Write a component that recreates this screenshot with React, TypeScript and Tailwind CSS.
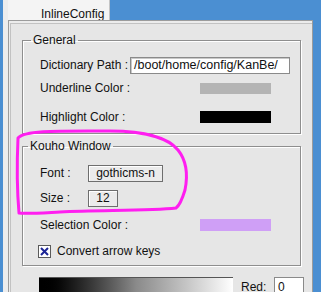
export default function App() {
  return (
    <div className="relative h-[292px] w-[321px] overflow-hidden bg-[#4b8fd2] font-['Liberation_Sans',Arial,sans-serif] text-[12px] leading-[12px] text-[#111]">
      <div className="ml-[3px] flex h-full">
        {/* window frame strip */}
        <div className="h-full w-[5px] bg-[#ededed]" />
        <div className="flex w-[305px] flex-col">
          <div className="flex h-[22px]">
            <div className="w-[102px] border-r border-[#c4c4c4] bg-[#f4f4f4] pl-[33px] pt-[8px] text-[12px] leading-[12px]">
              InlineConfig
            </div>
          </div>
          <div className="flex-1 border-l border-t border-r border-[#9c9c9c] bg-[#ececec] pl-[1px] pt-[2px]">
            <div className="h-full border-l border-t border-[#c2c2c2] bg-[#e6e6e6] pl-[11px] pt-[10px]">
              <fieldset className="w-[279px] border border-[#8e8e8e] p-0 pb-[6px] shadow-[1px_1px_0_#fff,inset_1px_1px_0_#fff]">
                <legend className="ml-[8px] px-[2px] leading-[12px]">General</legend>
                <div className="pl-[17px]">
                  <div className="mt-[9px] flex h-[20px] items-center">
                    <span className="w-[90px]">Dictionary Path :</span>
                    <div className="flex h-[17px] w-[160px] items-center border border-[#8a8a8a] bg-white pl-[3px] text-[12.5px] shadow-[inset_1px_1px_0_#c8c8c8]">
                      /boot/home/config/KanBe/
                    </div>
                  </div>
                  <div className="mt-[3px] flex h-[20px] items-center">
                    <span className="w-[160px]">Underline Color :</span>
                    <div className="h-[11px] w-[71px] bg-[#b4b4b4]" />
                  </div>
                  <div className="mt-[9px] flex h-[20px] items-center">
                    <span className="w-[160px]">Highlight Color :</span>
                    <div className="h-[12px] w-[71px] bg-black" />
                  </div>
                </div>
              </fieldset>

              <fieldset className="mt-[6px] w-[279px] border border-[#8e8e8e] p-0 pb-[4px] shadow-[1px_1px_0_#fff,inset_1px_1px_0_#fff]">
                <legend className="ml-[5px] px-[2px] leading-[12px]">Kouho Window</legend>
                <div className="pl-[17px]">
                  <div className="mt-[11px] flex h-[20px] items-center">
                    <span className="w-[48px]">Font :</span>
                    <div className="flex h-[17px] w-[75px] items-center justify-center border border-[#6e6e6e] bg-[#ebebeb] shadow-[inset_1px_1px_0_#fff]">
                      gothicms-n
                    </div>
                  </div>
                  <div className="mt-[5px] flex h-[20px] items-center">
                    <span className="w-[48px]">Size :</span>
                    <div className="flex h-[17px] w-[30px] items-center justify-center border border-[#6e6e6e] bg-[#ebebeb] shadow-[inset_1px_1px_0_#fff]">
                      12
                    </div>
                  </div>
                  <div className="mt-[7px] flex h-[20px] items-center">
                    <span className="w-[160px]">Selection Color :</span>
                    <div className="h-[12px] w-[71px] bg-[#cf9ff6]" />
                  </div>
                  <div className="mt-[6px] flex h-[20px] items-center">
                    <div className="-ml-[2px] flex h-[13px] w-[13px] items-center justify-center border border-[#5a5a5a] bg-white">
                      <svg width="9" height="9" viewBox="0 0 9 9">
                        <path d="M1 1L8 8M8 1L1 8" stroke="#1c2596" strokeWidth="2" />
                      </svg>
                    </div>
                    <span className="ml-[6px]">Convert arrow keys</span>
                  </div>
                </div>
              </fieldset>

              <div className="mt-[11px] flex items-start">
                <div className="ml-[17px] h-[20px] w-[194px] border-t border-[#555] bg-gradient-to-r from-black via-[#8a8a8a] to-white" />
                <span className="ml-[8px] mt-[4px] w-[33px]">Red:</span>
                <div className="h-[18px] w-[30px] border border-[#8a8a8a] bg-white pl-[3px] pt-[3px]">0</div>
              </div>
            </div>
          </div>
        </div>
      </div>

      <svg className="pointer-events-none absolute inset-0" width="321" height="292" viewBox="0 0 321 292">
        <path
          d="M18 138 C25 130 60 131 110 131 C150 131 170 140 178 150 C186 160 188 175 185 190 C182 200 180 205 176 208 C150 211 100 210 60 212 C40 213 25 214 19 213 C17 190 17 160 18 138 Z"
          fill="none"
          stroke="#ff1ef0"
          strokeWidth="3"
          strokeLinejoin="round"
        />
      </svg>
    </div>
  )
}
